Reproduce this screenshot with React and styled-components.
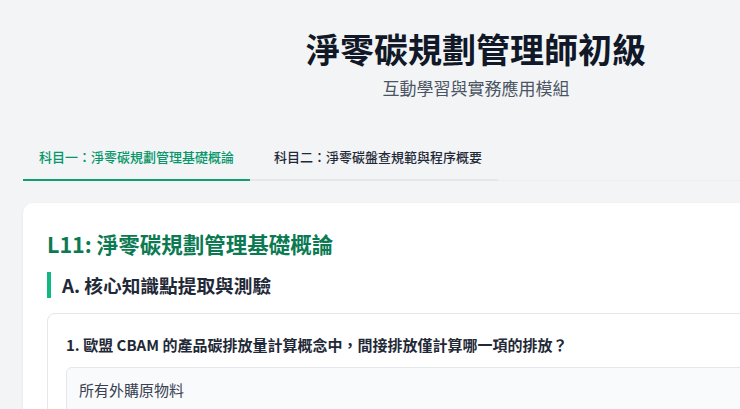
import React, { useState } from 'react';
import styled, { createGlobalStyle } from 'styled-components';

const GlobalStyle = createGlobalStyle`
  html, body {
    margin: 0;
    padding: 0;
    overflow-x: hidden;
    background: #f3f4f6;
    font-family: "Noto Sans CJK TC", "Noto Sans", sans-serif;
  }
`

const Page = styled.div`
  width: 906px;
  margin-left: 23px;
  padding-top: 28px;
`

const Header = styled.header`
  text-align: center;
`

const Title = styled.h1`
  margin: 0;
  font-size: 34px;
  line-height: 42px;
  font-weight: 700;
  color: #111827;
`

const Subtitle = styled.p`
  margin: 4px 0 0;
  font-size: 17px;
  line-height: 28px;
  color: #4b5563;
`

const TabWrap = styled.div`
  margin-top: 33px;
  border-bottom: 1px solid #eceef1;
`

const TabBar = styled.div`
  display: inline-flex;
  gap: 8px;
  border-bottom: 2px solid #e5e7eb;
  margin-bottom: -1px;
`

const Tab = styled.button`
  border: none;
  background: none;
  font-family: inherit;
  padding: 12px 16px;
  font-size: 13px;
  line-height: 20px;
  font-weight: 500;
  cursor: pointer;
  margin-bottom: -2px;
  color: ${p => (p.$active ? '#059669' : '#1f2937')};
  border-bottom: 2px solid ${p => (p.$active ? '#10a070' : 'transparent')};
`

const Card = styled.section`
  margin-top: 22px;
  background: #fff;
  border-radius: 10px;
  box-shadow: 0 1px 3px rgba(0, 0, 0, 0.06), 0 1px 2px rgba(0, 0, 0, 0.04);
  padding: 26px 24px 24px;
`

const LessonTitle = styled.h2`
  margin: 0;
  font-size: 21.5px;
  line-height: 30px;
  font-weight: 700;
  color: #0b7a52;
`

const SectionTitle = styled.h3`
  margin: 13px 0 0;
  border-left: 4px solid #10b981;
  padding-left: 11px;
  font-size: 18.7px;
  line-height: 26px;
  font-weight: 700;
  color: #1f2937;
`

const QuestionCard = styled.div`
  margin-top: 15px;
  border: 1px solid #e5e7eb;
  border-radius: 8px;
  padding: 18px;
`

const Question = styled.p`
  margin: 0 0 9px;
  font-size: 15px;
  line-height: 26px;
  font-weight: 700;
  color: #1f2937;
`

const Option = styled.div`
  border: 1px solid #e5e7eb;
  background: #f9fafb;
  border-radius: 6px;
  padding: 10px 12px;
  font-size: 15px;
  line-height: 24px;
  color: #374151;
  margin-bottom: 8px;
`

const tabs = ['科目一：淨零碳規劃管理基礎概論', '科目二：淨零碳盤查規範與程序概要']
const options = ['所有外購原物料', '外購電力', '運輸過程', '廢棄物處理']

function App() {
  const [active, setActive] = useState(0)
  return (
    <>
      <GlobalStyle />
      <Page>
        <Header>
          <Title>淨零碳規劃管理師初級</Title>
          <Subtitle>互動學習與實務應用模組</Subtitle>
        </Header>

        <TabWrap>
          <TabBar>
            {tabs.map((t, i) => (
              <Tab key={t} $active={i === active} onClick={() => setActive(i)}>{t}</Tab>
            ))}
          </TabBar>
        </TabWrap>

        <Card>
          <LessonTitle>L11: 淨零碳規劃管理基礎概論</LessonTitle>
          <SectionTitle>A. 核心知識點提取與測驗</SectionTitle>
          <QuestionCard>
            <Question>1. 歐盟 CBAM 的產品碳排放量計算概念中，間接排放僅計算哪一項的排放？</Question>
            {options.map(o => <Option key={o}>{o}</Option>)}
          </QuestionCard>
        </Card>
      </Page>
    </>
  );
}

export default App;
